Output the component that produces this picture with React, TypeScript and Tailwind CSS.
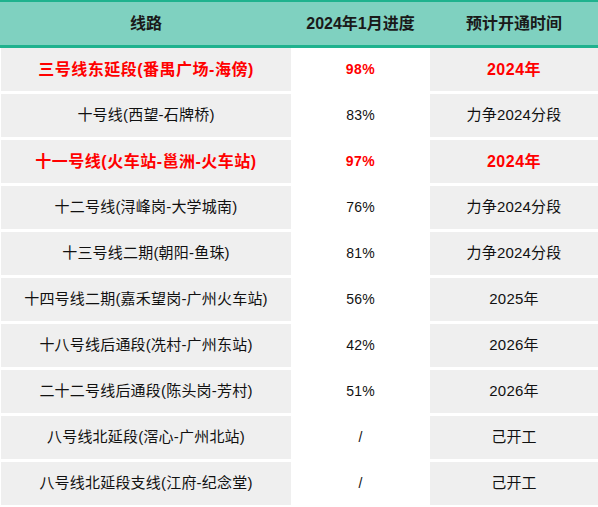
const rows = [
  { name: '三号线东延段(番禺广场-海傍)', progress: '98%', open: '2024年', hot: true },
  { name: '十号线(西望-石牌桥)', progress: '83%', open: '力争2024分段' },
  { name: '十一号线(火车站-邕洲-火车站)', progress: '97%', open: '2024年', hot: true },
  { name: '十二号线(浔峰岗-大学城南)', progress: '76%', open: '力争2024分段' },
  { name: '十三号线二期(朝阳-鱼珠)', progress: '81%', open: '力争2024分段' },
  { name: '十四号线二期(嘉禾望岗-广州火车站)', progress: '56%', open: '2025年' },
  { name: '十八号线后通段(冼村-广州东站)', progress: '42%', open: '2026年' },
  { name: '二十二号线后通段(陈头岗-芳村)', progress: '51%', open: '2026年' },
  { name: '八号线北延段(滘心-广州北站)', progress: '/', open: '己开工' },
  { name: '八号线北延段支线(江府-纪念堂)', progress: '/', open: '己开工' },
]

const font = "font-['Liberation_Sans','Noto_Sans_CJK_SC',sans-serif]"

export default function App() {
  return (
    <div className={`w-[598px] h-[507px] overflow-hidden bg-white ${font}`}>
      {/* 表头 */}
      <div className="grid grid-cols-[290px_133px_168px] gap-x-[3px] pl-[1px] h-[48px] bg-[#7fd1c0] border-t-2 border-b-[3px] border-[#1fb28e] text-[16px] font-bold text-[#1a1a1a]">
        <div className="flex items-center justify-center">线路</div>
        <div className="flex items-center justify-center">2024年1月进度</div>
        <div className="flex items-center justify-center">预计开通时间</div>
      </div>

      {/* 数据行 */}
      <div className="flex flex-col gap-y-[3px]">
        {rows.map((r) => (
          <div
            key={r.name}
            className={
              'grid grid-cols-[290px_133px_168px] gap-x-[3px] pl-[1px] h-[43px] ' +
              (r.hot ? 'text-[16px] tracking-[0.5px] font-bold text-[#ff0000]' : 'text-[15px] tracking-[0.2px] text-[#111]')
            }
          >
            <div className="flex items-center justify-center bg-[#efefef]">{r.name}</div>
            <div className="flex items-center justify-center bg-white text-[14px]">{r.progress}</div>
            <div className="flex items-center justify-center bg-[#efefef]">{r.open}</div>
          </div>
        ))}
      </div>
    </div>
  )
}
